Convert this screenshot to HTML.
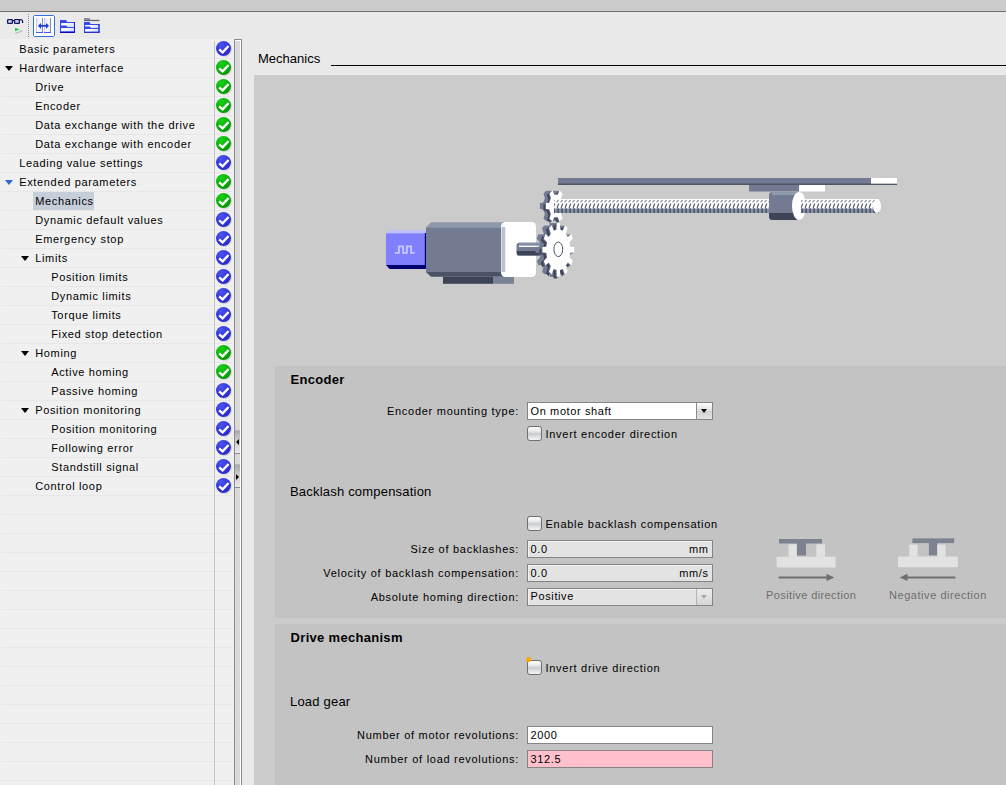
<!DOCTYPE html>
<html><head><meta charset="utf-8">
<style>
*{box-sizing:border-box;margin:0;padding:0}
html,body{width:1006px;height:785px;overflow:hidden;background:#e9e9e9;font-family:"Liberation Sans",sans-serif;color:#000}
.abs{position:absolute}
#topbar{position:absolute;left:0;top:0;width:1006px;height:12px;background:#cbcbcb;border-bottom:1px solid #6f6f6f}
#toolbar{position:absolute;left:0;top:12px;width:242px;height:27px;background:#eaeaea}
#tree{position:absolute;left:0;top:39px;width:234px;height:746px;background:#f0f0f0}
.sep{position:absolute;left:1px;width:232px;height:1px;background:#e7e7e7}
#vsep{position:absolute;left:214px;top:41px;width:1px;height:744px;background:#c4c4c4}
.tt{position:absolute;height:19px;line-height:19px;font-size:11px;letter-spacing:0.66px;white-space:nowrap;padding-top:1px}
.tt.sel{background:#c6ced9;margin-left:-2px;padding-left:2px;padding-right:0;margin-top:1px;height:18px;line-height:18px;padding-top:0}
.tri{position:absolute;width:0;height:0;border-left:4.2px solid transparent;border-right:4.2px solid transparent;border-top:5px solid #000}
.tri.tb{border-top-color:#3264d8}
.ck{position:absolute;left:216px;width:15px;height:15px;border-radius:50%;box-shadow:1px 1px 1px rgba(0,0,0,0.12)}
.ck svg{position:absolute;left:0;top:0}
.ck.b{background:radial-gradient(circle at 35% 25%,#4a55f0 0%,#3434d8 50%,#2424b4 100%)}
.ck.g{background:radial-gradient(circle at 35% 25%,#18d018 0%,#08b008 50%,#007a00 100%)}
#scroll{position:absolute;left:234px;top:39px;width:8px;height:746px;background:#d9d9d9;border:1px solid #8a8a8a;border-bottom:none;box-shadow:inset -1px 1px 0 #fff}
#pane{position:absolute;left:242px;top:12px;width:764px;height:773px;background:#e9e9e9}
#hdr{position:absolute;left:258px;top:51px;font-size:13px;line-height:16px;white-space:nowrap}
#hline{position:absolute;left:331px;top:65px;width:675px;height:1px;background:#000}
#gray{position:absolute;left:254px;top:75px;width:752px;height:710px;background:#cbcbcb}
.sec{position:absolute;left:275px;width:731px;background:#c3c3c3}
.h1{position:absolute;left:290.6px;font-size:13px;font-weight:bold;letter-spacing:0.3px;white-space:nowrap;line-height:16px}
.h2{position:absolute;left:290px;font-size:13px;white-space:nowrap;line-height:16px;letter-spacing:0.2px}
.lbl{position:absolute;right:487px;font-size:11px;letter-spacing:0.72px;white-space:nowrap;line-height:14px;text-align:right}
.fld{position:absolute;left:527px;width:186px;height:18px;border:1px solid #858585;background:#fff;font-size:11px;letter-spacing:0.6px;line-height:16px;padding-left:2.6px;white-space:nowrap}
.fld.dis{background:#e3e3e3;box-shadow:inset 1px 1px 0 #f4f4f4}
.fld .unit{position:absolute;right:3.4px;top:0}
.dd{height:17px;line-height:15px}
.ddb{position:absolute;right:0;top:0;width:16px;height:15px;border-left:1px solid #8a8a8a;background:linear-gradient(#fdfdfd,#e6e6e6 40%,#d4d4d4 55%,#e2e2e2)}
.ddb.dis2{background:linear-gradient(#ececec,#d6d6d6);border-left-color:#b4b4b4}.ddb.dis2:after{border-top-color:#a8a8a8}
.ddb:after{content:"";position:absolute;left:4px;top:6px;border-left:3.6px solid transparent;border-right:3.6px solid transparent;border-top:4.5px solid #000}
.cb{position:absolute;left:527px;width:15px;height:15px;border:1px solid #6f6f6f;border-radius:3px;background:linear-gradient(#fafafa 10%,#e0e2e4 40%,#c9cacd 52%,#e4e5e6 80%,#f6f6f6)}
.cbl{position:absolute;left:545.5px;font-size:11px;letter-spacing:0.72px;white-space:nowrap;line-height:14px}
.dirt{position:absolute;font-size:11px;letter-spacing:0.4px;color:#6e6e6e;white-space:nowrap;line-height:14px}
</style></head><body>
<div id="topbar"></div>
<div id="toolbar"></div>
<svg class="abs" style="left:0;top:12px" width="242" height="27" viewBox="0 12 242 27">
<defs><linearGradient id="lens" x1="0" y1="0" x2="1" y2="1"><stop offset="0" stop-color="#ffffff"/><stop offset="1" stop-color="#b8b8b8"/></linearGradient></defs>
<rect x="7.6" y="19.6" width="4.8" height="3.8" rx="0.6" fill="url(#lens)" stroke="#10186e" stroke-width="1.3"/>
<rect x="14.6" y="19.6" width="4.8" height="3.8" rx="0.6" fill="url(#lens)" stroke="#10186e" stroke-width="1.3"/>
<path d="M12.4 20.6 L14.6 20.6" stroke="#10186e" stroke-width="1.2"/>
<path d="M19.4 19.6 L21 19.6 Q22.6 19.6 22.6 21.5 L22.6 23" fill="none" stroke="#10186e" stroke-width="1.3"/>
<path d="M15 27.8 L19.8 29.6 L15 31.2 Z" fill="#20d040"/>
<path d="M15.2 33.6 L22.6 30.6" stroke="#a0a6b8" stroke-width="0.9"/>
<path d="M28.5 14 L28.5 37" stroke="#8a8a8a" stroke-width="1" stroke-dasharray="1 1"/>
<path d="M34.5 15.5 L53.5 15.5 L54.5 16.5 L54.5 35.5 L53.5 36.5 L34.5 36.5 L33.5 35.5 L33.5 16.5 Z" fill="#ffffff" stroke="#3070e0" stroke-width="1"/>
<defs><linearGradient id="pnl" x1="0" y1="0" x2="1" y2="1"><stop offset="0" stop-color="#dfe4fb"/><stop offset="0.5" stop-color="#f6f8ff"/><stop offset="1" stop-color="#e4e8fb"/></linearGradient></defs>
<rect x="36" y="18" width="6.5" height="14.5" fill="url(#pnl)"/>
<rect x="44" y="18" width="6.5" height="14.5" fill="url(#pnl)"/>
<rect x="36" y="18" width="1" height="14.5" fill="#c0c8f4"/>
<rect x="44" y="18" width="1" height="14.5" fill="#c0c8f4"/>
<rect x="42" y="18" width="1" height="14.5" fill="#8a90a0"/>
<rect x="50" y="18" width="1" height="14.5" fill="#8a90a0"/>
<rect x="36" y="32" width="7" height="1" fill="#4858e0"/>
<rect x="44" y="32" width="7" height="1" fill="#4858e0"/>
<path d="M39.5 25.8 L47.5 25.8" stroke="#1e3cd0" stroke-width="1.8"/>
<path d="M38 25.8 L41 22.9 L41 28.9 Z M49 25.8 L46 22.9 L46 28.9 Z" fill="#1e3cd0"/>
<defs><linearGradient id="band" x1="0" y1="0" x2="1" y2="0.4"><stop offset="0" stop-color="#dce2ff"/><stop offset="0.35" stop-color="#ffffff"/><stop offset="1" stop-color="#d8defc"/></linearGradient></defs>
<path d="M60 20 L66 20 L67.3 22 L75 22 L75 33 L60 33 Z" fill="#3448f0"/>
<rect x="60" y="32" width="15" height="1" fill="#0808b0"/>
<rect x="74" y="22" width="1" height="11" fill="#1020c0"/>
<path d="M61 23 L74 23 L74 27 L67.5 27 L66.3 25.6 L61 25.6 Z" fill="url(#band)"/>
<rect x="61" y="28" width="13" height="3.2" fill="url(#band)"/>
<path d="M84 18 L89.5 18 L90.5 19.8 L99.4 19.8 L99.4 21 L84 21 Z" fill="#868c9c"/>
<rect x="84" y="20.2" width="15.4" height="0.9" fill="#5a6070"/>
<path d="M84 22 L89.5 22 L90.7 24 L99.5 24 L99.5 32.6 L84 32.6 Z" fill="#3448f0"/>
<rect x="84" y="31.7" width="15.5" height="1" fill="#0808b0"/>
<rect x="98.5" y="24" width="1" height="8.6" fill="#1020c0"/>
<path d="M85 25 L98.3 25 L98.3 27.9 L91 27.9 L89.8 26.6 L85 26.6 Z" fill="url(#band)"/>
<rect x="85" y="29" width="13.3" height="2.6" fill="url(#band)"/>
</svg>
<div id="pane"></div>
<div id="tree"></div>
<div class="sep" style="top:58px"></div><div class="sep" style="top:77px"></div><div class="sep" style="top:96px"></div><div class="sep" style="top:115px"></div><div class="sep" style="top:134px"></div><div class="sep" style="top:153px"></div><div class="sep" style="top:172px"></div><div class="sep" style="top:191px"></div><div class="sep" style="top:210px"></div><div class="sep" style="top:229px"></div><div class="sep" style="top:248px"></div><div class="sep" style="top:267px"></div><div class="sep" style="top:286px"></div><div class="sep" style="top:305px"></div><div class="sep" style="top:324px"></div><div class="sep" style="top:343px"></div><div class="sep" style="top:362px"></div><div class="sep" style="top:381px"></div><div class="sep" style="top:400px"></div><div class="sep" style="top:419px"></div><div class="sep" style="top:438px"></div><div class="sep" style="top:457px"></div><div class="sep" style="top:476px"></div><div class="sep" style="top:495px"></div><div class="sep" style="top:514px"></div><div class="sep" style="top:533px"></div><div class="sep" style="top:552px"></div><div class="sep" style="top:571px"></div><div class="sep" style="top:590px"></div><div class="sep" style="top:609px"></div><div class="sep" style="top:628px"></div><div class="sep" style="top:647px"></div><div class="sep" style="top:666px"></div><div class="sep" style="top:685px"></div><div class="sep" style="top:704px"></div><div class="sep" style="top:723px"></div><div class="sep" style="top:742px"></div><div class="sep" style="top:761px"></div><div class="sep" style="top:780px"></div>
<div class="tt" style="left:19.2px;top:39px">Basic parameters</div>
<div class="ck b" style="top:41px"><svg width="15" height="15"><path d="M3.2 8.4 L6.6 11.4 L12.6 5" fill="none" stroke="#fff" stroke-width="2.4" stroke-linecap="butt"/></svg></div>
<div class="tri " style="left:5px;top:66px"></div>
<div class="tt" style="left:19.2px;top:58px">Hardware interface</div>
<div class="ck g" style="top:60px"><svg width="15" height="15"><path d="M3.2 8.4 L6.6 11.4 L12.6 5" fill="none" stroke="#fff" stroke-width="2.4" stroke-linecap="butt"/></svg></div>
<div class="tt" style="left:35.2px;top:77px">Drive</div>
<div class="ck g" style="top:79px"><svg width="15" height="15"><path d="M3.2 8.4 L6.6 11.4 L12.6 5" fill="none" stroke="#fff" stroke-width="2.4" stroke-linecap="butt"/></svg></div>
<div class="tt" style="left:35.2px;top:96px">Encoder</div>
<div class="ck g" style="top:98px"><svg width="15" height="15"><path d="M3.2 8.4 L6.6 11.4 L12.6 5" fill="none" stroke="#fff" stroke-width="2.4" stroke-linecap="butt"/></svg></div>
<div class="tt" style="left:35.2px;top:115px">Data exchange with the drive</div>
<div class="ck g" style="top:117px"><svg width="15" height="15"><path d="M3.2 8.4 L6.6 11.4 L12.6 5" fill="none" stroke="#fff" stroke-width="2.4" stroke-linecap="butt"/></svg></div>
<div class="tt" style="left:35.2px;top:134px">Data exchange with encoder</div>
<div class="ck g" style="top:136px"><svg width="15" height="15"><path d="M3.2 8.4 L6.6 11.4 L12.6 5" fill="none" stroke="#fff" stroke-width="2.4" stroke-linecap="butt"/></svg></div>
<div class="tt" style="left:19.2px;top:153px">Leading value settings</div>
<div class="ck b" style="top:155px"><svg width="15" height="15"><path d="M3.2 8.4 L6.6 11.4 L12.6 5" fill="none" stroke="#fff" stroke-width="2.4" stroke-linecap="butt"/></svg></div>
<div class="tri tb" style="left:5px;top:180px"></div>
<div class="tt" style="left:19.2px;top:172px">Extended parameters</div>
<div class="ck g" style="top:174px"><svg width="15" height="15"><path d="M3.2 8.4 L6.6 11.4 L12.6 5" fill="none" stroke="#fff" stroke-width="2.4" stroke-linecap="butt"/></svg></div>
<div class="tt sel" style="left:35.2px;top:191px">Mechanics</div>
<div class="ck g" style="top:193px"><svg width="15" height="15"><path d="M3.2 8.4 L6.6 11.4 L12.6 5" fill="none" stroke="#fff" stroke-width="2.4" stroke-linecap="butt"/></svg></div>
<div class="tt" style="left:35.2px;top:210px">Dynamic default values</div>
<div class="ck b" style="top:212px"><svg width="15" height="15"><path d="M3.2 8.4 L6.6 11.4 L12.6 5" fill="none" stroke="#fff" stroke-width="2.4" stroke-linecap="butt"/></svg></div>
<div class="tt" style="left:35.2px;top:229px">Emergency stop</div>
<div class="ck b" style="top:231px"><svg width="15" height="15"><path d="M3.2 8.4 L6.6 11.4 L12.6 5" fill="none" stroke="#fff" stroke-width="2.4" stroke-linecap="butt"/></svg></div>
<div class="tri " style="left:21px;top:256px"></div>
<div class="tt" style="left:35.2px;top:248px">Limits</div>
<div class="ck b" style="top:250px"><svg width="15" height="15"><path d="M3.2 8.4 L6.6 11.4 L12.6 5" fill="none" stroke="#fff" stroke-width="2.4" stroke-linecap="butt"/></svg></div>
<div class="tt" style="left:51.2px;top:267px">Position limits</div>
<div class="ck b" style="top:269px"><svg width="15" height="15"><path d="M3.2 8.4 L6.6 11.4 L12.6 5" fill="none" stroke="#fff" stroke-width="2.4" stroke-linecap="butt"/></svg></div>
<div class="tt" style="left:51.2px;top:286px">Dynamic limits</div>
<div class="ck b" style="top:288px"><svg width="15" height="15"><path d="M3.2 8.4 L6.6 11.4 L12.6 5" fill="none" stroke="#fff" stroke-width="2.4" stroke-linecap="butt"/></svg></div>
<div class="tt" style="left:51.2px;top:305px">Torque limits</div>
<div class="ck b" style="top:307px"><svg width="15" height="15"><path d="M3.2 8.4 L6.6 11.4 L12.6 5" fill="none" stroke="#fff" stroke-width="2.4" stroke-linecap="butt"/></svg></div>
<div class="tt" style="left:51.2px;top:324px">Fixed stop detection</div>
<div class="ck b" style="top:326px"><svg width="15" height="15"><path d="M3.2 8.4 L6.6 11.4 L12.6 5" fill="none" stroke="#fff" stroke-width="2.4" stroke-linecap="butt"/></svg></div>
<div class="tri " style="left:21px;top:351px"></div>
<div class="tt" style="left:35.2px;top:343px">Homing</div>
<div class="ck g" style="top:345px"><svg width="15" height="15"><path d="M3.2 8.4 L6.6 11.4 L12.6 5" fill="none" stroke="#fff" stroke-width="2.4" stroke-linecap="butt"/></svg></div>
<div class="tt" style="left:51.2px;top:362px">Active homing</div>
<div class="ck g" style="top:364px"><svg width="15" height="15"><path d="M3.2 8.4 L6.6 11.4 L12.6 5" fill="none" stroke="#fff" stroke-width="2.4" stroke-linecap="butt"/></svg></div>
<div class="tt" style="left:51.2px;top:381px">Passive homing</div>
<div class="ck b" style="top:383px"><svg width="15" height="15"><path d="M3.2 8.4 L6.6 11.4 L12.6 5" fill="none" stroke="#fff" stroke-width="2.4" stroke-linecap="butt"/></svg></div>
<div class="tri " style="left:21px;top:408px"></div>
<div class="tt" style="left:35.2px;top:400px">Position monitoring</div>
<div class="ck b" style="top:402px"><svg width="15" height="15"><path d="M3.2 8.4 L6.6 11.4 L12.6 5" fill="none" stroke="#fff" stroke-width="2.4" stroke-linecap="butt"/></svg></div>
<div class="tt" style="left:51.2px;top:419px">Position monitoring</div>
<div class="ck b" style="top:421px"><svg width="15" height="15"><path d="M3.2 8.4 L6.6 11.4 L12.6 5" fill="none" stroke="#fff" stroke-width="2.4" stroke-linecap="butt"/></svg></div>
<div class="tt" style="left:51.2px;top:438px">Following error</div>
<div class="ck b" style="top:440px"><svg width="15" height="15"><path d="M3.2 8.4 L6.6 11.4 L12.6 5" fill="none" stroke="#fff" stroke-width="2.4" stroke-linecap="butt"/></svg></div>
<div class="tt" style="left:51.2px;top:457px">Standstill signal</div>
<div class="ck b" style="top:459px"><svg width="15" height="15"><path d="M3.2 8.4 L6.6 11.4 L12.6 5" fill="none" stroke="#fff" stroke-width="2.4" stroke-linecap="butt"/></svg></div>
<div class="tt" style="left:35.2px;top:476px">Control loop</div>
<div class="ck b" style="top:478px"><svg width="15" height="15"><path d="M3.2 8.4 L6.6 11.4 L12.6 5" fill="none" stroke="#fff" stroke-width="2.4" stroke-linecap="butt"/></svg></div>
<div id="vsep"></div>
<div id="scroll"></div>
<div class="abs" style="left:235px;top:430px;width:5px;height:24px;background:linear-gradient(#a9a9a9,#cfcfcf 45%,#e9e9e9);border-bottom:1px solid #8a8a8a;border-top:1px solid #b8b8b8"></div>
<div class="abs" style="left:236px;top:439px;width:0;height:0;border-top:3px solid transparent;border-bottom:3px solid transparent;border-right:3px solid #000"></div>
<div class="abs" style="left:235px;top:464px;width:5px;height:24px;background:linear-gradient(#a9a9a9,#cfcfcf 45%,#e9e9e9);border-bottom:1px solid #8a8a8a;border-top:1px solid #b8b8b8"></div>
<div class="abs" style="left:236px;top:474px;width:0;height:0;border-top:3px solid transparent;border-bottom:3px solid transparent;border-left:3px solid #000"></div>

<div id="hdr">Mechanics</div>
<div id="hline"></div>
<div id="gray"></div>
<svg class="abs" style="left:0;top:0" width="1006" height="300" viewBox="0 0 1006 300"><rect x="558" y="178" width="313" height="6" fill="#737b93"/><rect x="558" y="183.5" width="339" height="1.5" fill="#4d5569"/><rect x="871" y="178" width="26" height="5.5" fill="#fff"/><rect x="749" y="185" width="50" height="6.5" fill="#737b93"/><rect x="799" y="185" width="26" height="6.5" fill="#fff"/><path d="M556.8 202.8 L560.1 203.1 L560.1 208.9 L556.8 209.2 L555.1 214.0 L556.6 218.6 L553.5 221.5 L551.7 217.2 L548.3 217.2 L546.5 221.5 L543.4 218.6 L544.9 214.0 L543.2 209.2 L539.9 208.9 L539.9 203.1 L543.2 202.8 L544.9 198.0 L543.4 193.4 L546.5 190.5 L548.3 194.8 L551.7 194.8 L553.5 190.5 L556.6 193.4 L555.1 198.0Z" fill="#737b93"/><path d="M557.8 202.8 L561.1 203.1 L561.1 208.9 L557.8 209.2 L556.1 214.0 L557.6 218.6 L554.5 221.5 L552.7 217.2 L549.3 217.2 L547.5 221.5 L544.4 218.6 L545.9 214.0 L544.2 209.2 L540.9 208.9 L540.9 203.1 L544.2 202.8 L545.9 198.0 L544.4 193.4 L547.5 190.5 L549.3 194.8 L552.7 194.8 L554.5 190.5 L557.6 193.4 L556.1 198.0Z" fill="#737b93"/><path d="M558.8 202.8 L562.1 203.1 L562.1 208.9 L558.8 209.2 L557.1 214.0 L558.6 218.6 L555.5 221.5 L553.7 217.2 L550.3 217.2 L548.5 221.5 L545.4 218.6 L546.9 214.0 L545.2 209.2 L541.9 208.9 L541.9 203.1 L545.2 202.8 L546.9 198.0 L545.4 193.4 L548.5 190.5 L550.3 194.8 L553.7 194.8 L555.5 190.5 L558.6 193.4 L557.1 198.0Z" fill="#737b93"/><path d="M559.8 202.8 L563.1 203.1 L563.1 208.9 L559.8 209.2 L558.1 214.0 L559.6 218.6 L556.5 221.5 L554.7 217.2 L551.3 217.2 L549.5 221.5 L546.4 218.6 L547.9 214.0 L546.2 209.2 L542.9 208.9 L542.9 203.1 L546.2 202.8 L547.9 198.0 L546.4 193.4 L549.5 190.5 L551.3 194.8 L554.7 194.8 L556.5 190.5 L559.6 193.4 L558.1 198.0Z" fill="#737b93"/><path d="M560.8 202.8 L564.1 203.1 L564.1 208.9 L560.8 209.2 L559.1 214.0 L560.6 218.6 L557.5 221.5 L555.7 217.2 L552.3 217.2 L550.5 221.5 L547.4 218.6 L548.9 214.0 L547.2 209.2 L543.9 208.9 L543.9 203.1 L547.2 202.8 L548.9 198.0 L547.4 193.4 L550.5 190.5 L552.3 194.8 L555.7 194.8 L557.5 190.5 L560.6 193.4 L559.1 198.0Z" fill="#737b93"/><path d="M561.8 202.8 L565.1 203.1 L565.1 208.9 L561.8 209.2 L560.1 214.0 L561.6 218.6 L558.5 221.5 L556.7 217.2 L553.3 217.2 L551.5 221.5 L548.4 218.6 L549.9 214.0 L548.2 209.2 L544.9 208.9 L544.9 203.1 L548.2 202.8 L549.9 198.0 L548.4 193.4 L551.5 190.5 L553.3 194.8 L556.7 194.8 L558.5 190.5 L561.6 193.4 L560.1 198.0Z" fill="#737b93"/><path d="M560.3 204.3 L563.6 204.6 L563.6 210.4 L560.3 210.7 L558.6 215.5 L560.1 220.1 L557.0 223.0 L555.2 218.7 L551.8 218.7 L550.0 223.0 L546.9 220.1 L548.4 215.5 L546.7 210.7 L543.4 210.4 L543.4 204.6 L546.7 204.3 L548.4 199.5 L546.9 194.9 L550.0 192.0 L551.8 196.3 L555.2 196.3 L557.0 192.0 L560.1 194.9 L558.6 199.5Z" fill="#3c4456"/><path d="M561.8 203.4 L565.1 203.7 L565.1 209.5 L561.8 209.8 L560.1 214.6 L561.6 219.2 L558.5 222.1 L556.7 217.8 L553.3 217.8 L551.5 222.1 L548.4 219.2 L549.9 214.6 L548.2 209.8 L544.9 209.5 L544.9 203.7 L548.2 203.4 L549.9 198.6 L548.4 194.0 L551.5 191.1 L553.3 195.4 L556.7 195.4 L558.5 191.1 L561.6 194.0 L560.1 198.6Z" fill="#5a6278"/><path d="M562.8 202.8 L566.1 203.1 L566.1 208.9 L562.8 209.2 L561.1 214.0 L562.6 218.6 L559.5 221.5 L557.7 217.2 L554.3 217.2 L552.5 221.5 L549.4 218.6 L550.9 214.0 L549.2 209.2 L545.9 208.9 L545.9 203.1 L549.2 202.8 L550.9 198.0 L549.4 193.4 L552.5 190.5 L554.3 194.8 L557.7 194.8 L559.5 190.5 L562.6 193.4 L561.1 198.0Z" fill="#fff"/><defs><pattern id="thr" x="0" y="199" width="4" height="14" patternUnits="userSpaceOnUse"><rect x="0" y="0" width="4" height="14" fill="#fff"/><rect x="0" y="9.5" width="4" height="4.5" fill="#8a92a8"/><path d="M1.6 14 Q1.0 11.7 1.6 9.5 L3.0 9.5 Q2.5 11.7 3.0 14 Z" fill="#454d62"/><path d="M1.2 9.4 Q1.6 6.5 2.9 4.6" fill="none" stroke="#5a6278" stroke-width="1.2"/><path d="M0.5 3.1 L2.6 1.2" stroke="#7a8298" stroke-width="1.1"/></pattern></defs><rect x="554" y="199" width="325" height="14" fill="url(#thr)"/><ellipse cx="877" cy="206" rx="4" ry="7" fill="#fff"/><path d="M769 195 Q769 192 772 192 L800 192 L800 220 L772 220 Q769 220 769 217 Z" fill="#737b93"/><rect x="772" y="192" width="28" height="3" fill="#8e99ab"/><path d="M769 213 L800 213 L800 220 L773 220 Q769 220 769 216Z" fill="#3c4456"/><ellipse cx="799" cy="206" rx="7" ry="14" fill="#fff"/><rect x="801" y="199" width="7" height="14" fill="url(#thr)"/><path d="M386 233.3 L389 230.2 L426 230.2 L426 233.3 Z" fill="#c0c0ff"/><rect x="386" y="233.3" width="39" height="31.7" fill="#8080ff"/><rect x="424.8" y="233" width="1.4" height="36" fill="#000060"/><path d="M386 265 L426 265 L426 269 L389.5 269 Z" fill="#000070"/><path d="M394.9 252.8 L398.9 252.8 L398.9 246.3 L403.2 246.3 L403.2 252.8 L406.9 252.8 L406.9 246.3 L411.1 246.3 L411.1 252.8 L414.8 252.8" fill="none" stroke="#c8c8ff" stroke-width="1.8"/><path d="M426 227.4 L431 222.2 L505 222.2 L505 227.4 Z" fill="#8e9aab"/><rect x="426" y="227.4" width="79" height="44.6" fill="#737b93"/><path d="M426 272 L505 272 L505 276.8 L431 276.8 Z" fill="#4a5266"/><rect x="443" y="276.8" width="50" height="7" fill="#3c4456"/><rect x="493" y="276.8" width="21" height="7" fill="#7a8296"/><rect x="501" y="222" width="35" height="55" rx="4.5" fill="#fff"/><rect x="501.5" y="227" width="3.8" height="45" fill="#bcc1cf"/><path d="M519 242.7 L546 242.7 L546 255.6 L519 255.6 Q516.5 255.6 516.5 252 L516.5 246 Q516.5 242.7 519 242.7Z" fill="#737b93"/><rect x="519" y="242.7" width="27" height="3" fill="#8890a8"/><rect x="519" y="245.7" width="25" height="1.3" fill="#fff"/><path d="M516.8 251 L546 251 L546 255.6 L519 255.6 Q516.8 255.6 516.8 253Z" fill="#3c4456"/><path d="M563.3 246.8 L567.2 247.1 L567.2 252.5 L563.3 252.8 L562.5 257.3 L565.8 260.9 L564.2 265.6 L560.8 262.5 L558.8 265.9 L560.6 271.7 L557.9 274.4 L555.8 268.9 L553.1 270.1 L552.9 276.7 L549.7 276.7 L549.5 270.1 L546.8 268.9 L544.7 274.4 L542.0 271.7 L543.8 265.9 L541.8 262.5 L538.4 265.6 L536.8 260.9 L540.1 257.3 L539.3 252.8 L535.4 252.5 L535.4 247.1 L539.3 246.8 L540.1 242.3 L536.8 238.7 L538.4 234.0 L541.8 237.1 L543.8 233.7 L542.0 227.9 L544.7 225.2 L546.8 230.7 L549.5 229.5 L549.7 222.9 L552.9 222.9 L553.1 229.5 L555.8 230.7 L557.9 225.2 L560.6 227.9 L558.8 233.7 L560.8 237.1 L564.2 234.0 L565.8 238.7 L562.5 242.3Z" fill="#737b93"/><path d="M564.3 246.8 L568.2 247.1 L568.2 252.5 L564.3 252.8 L563.5 257.3 L566.8 260.9 L565.2 265.6 L561.8 262.5 L559.8 265.9 L561.6 271.7 L558.9 274.4 L556.8 268.9 L554.1 270.1 L553.9 276.7 L550.7 276.7 L550.5 270.1 L547.8 268.9 L545.7 274.4 L543.0 271.7 L544.8 265.9 L542.8 262.5 L539.4 265.6 L537.8 260.9 L541.1 257.3 L540.3 252.8 L536.4 252.5 L536.4 247.1 L540.3 246.8 L541.1 242.3 L537.8 238.7 L539.4 234.0 L542.8 237.1 L544.8 233.7 L543.0 227.9 L545.7 225.2 L547.8 230.7 L550.5 229.5 L550.7 222.9 L553.9 222.9 L554.1 229.5 L556.8 230.7 L558.9 225.2 L561.6 227.9 L559.8 233.7 L561.8 237.1 L565.2 234.0 L566.8 238.7 L563.5 242.3Z" fill="#737b93"/><path d="M565.3 246.8 L569.2 247.1 L569.2 252.5 L565.3 252.8 L564.5 257.3 L567.8 260.9 L566.2 265.6 L562.8 262.5 L560.8 265.9 L562.6 271.7 L559.9 274.4 L557.8 268.9 L555.1 270.1 L554.9 276.7 L551.7 276.7 L551.5 270.1 L548.8 268.9 L546.7 274.4 L544.0 271.7 L545.8 265.9 L543.8 262.5 L540.4 265.6 L538.8 260.9 L542.1 257.3 L541.3 252.8 L537.4 252.5 L537.4 247.1 L541.3 246.8 L542.1 242.3 L538.8 238.7 L540.4 234.0 L543.8 237.1 L545.8 233.7 L544.0 227.9 L546.7 225.2 L548.8 230.7 L551.5 229.5 L551.7 222.9 L554.9 222.9 L555.1 229.5 L557.8 230.7 L559.9 225.2 L562.6 227.9 L560.8 233.7 L562.8 237.1 L566.2 234.0 L567.8 238.7 L564.5 242.3Z" fill="#737b93"/><path d="M566.3 246.8 L570.2 247.1 L570.2 252.5 L566.3 252.8 L565.5 257.3 L568.8 260.9 L567.2 265.6 L563.8 262.5 L561.8 265.9 L563.6 271.7 L560.9 274.4 L558.8 268.9 L556.1 270.1 L555.9 276.7 L552.7 276.7 L552.5 270.1 L549.8 268.9 L547.7 274.4 L545.0 271.7 L546.8 265.9 L544.8 262.5 L541.4 265.6 L539.8 260.9 L543.1 257.3 L542.3 252.8 L538.4 252.5 L538.4 247.1 L542.3 246.8 L543.1 242.3 L539.8 238.7 L541.4 234.0 L544.8 237.1 L546.8 233.7 L545.0 227.9 L547.7 225.2 L549.8 230.7 L552.5 229.5 L552.7 222.9 L555.9 222.9 L556.1 229.5 L558.8 230.7 L560.9 225.2 L563.6 227.9 L561.8 233.7 L563.8 237.1 L567.2 234.0 L568.8 238.7 L565.5 242.3Z" fill="#737b93"/><path d="M567.3 246.8 L571.2 247.1 L571.2 252.5 L567.3 252.8 L566.5 257.3 L569.8 260.9 L568.2 265.6 L564.8 262.5 L562.8 265.9 L564.6 271.7 L561.9 274.4 L559.8 268.9 L557.1 270.1 L556.9 276.7 L553.7 276.7 L553.5 270.1 L550.8 268.9 L548.7 274.4 L546.0 271.7 L547.8 265.9 L545.8 262.5 L542.4 265.6 L540.8 260.9 L544.1 257.3 L543.3 252.8 L539.4 252.5 L539.4 247.1 L543.3 246.8 L544.1 242.3 L540.8 238.7 L542.4 234.0 L545.8 237.1 L547.8 233.7 L546.0 227.9 L548.7 225.2 L550.8 230.7 L553.5 229.5 L553.7 222.9 L556.9 222.9 L557.1 229.5 L559.8 230.7 L561.9 225.2 L564.6 227.9 L562.8 233.7 L564.8 237.1 L568.2 234.0 L569.8 238.7 L566.5 242.3Z" fill="#737b93"/><path d="M568.3 246.8 L572.2 247.1 L572.2 252.5 L568.3 252.8 L567.5 257.3 L570.8 260.9 L569.2 265.6 L565.8 262.5 L563.8 265.9 L565.6 271.7 L562.9 274.4 L560.8 268.9 L558.1 270.1 L557.9 276.7 L554.7 276.7 L554.5 270.1 L551.8 268.9 L549.7 274.4 L547.0 271.7 L548.8 265.9 L546.8 262.5 L543.4 265.6 L541.8 260.9 L545.1 257.3 L544.3 252.8 L540.4 252.5 L540.4 247.1 L544.3 246.8 L545.1 242.3 L541.8 238.7 L543.4 234.0 L546.8 237.1 L548.8 233.7 L547.0 227.9 L549.7 225.2 L551.8 230.7 L554.5 229.5 L554.7 222.9 L557.9 222.9 L558.1 229.5 L560.8 230.7 L562.9 225.2 L565.6 227.9 L563.8 233.7 L565.8 237.1 L569.2 234.0 L570.8 238.7 L567.5 242.3Z" fill="#737b93"/><path d="M569.3 246.8 L573.2 247.1 L573.2 252.5 L569.3 252.8 L568.5 257.3 L571.8 260.9 L570.2 265.6 L566.8 262.5 L564.8 265.9 L566.6 271.7 L563.9 274.4 L561.8 268.9 L559.1 270.1 L558.9 276.7 L555.7 276.7 L555.5 270.1 L552.8 268.9 L550.7 274.4 L548.0 271.7 L549.8 265.9 L547.8 262.5 L544.4 265.6 L542.8 260.9 L546.1 257.3 L545.3 252.8 L541.4 252.5 L541.4 247.1 L545.3 246.8 L546.1 242.3 L542.8 238.7 L544.4 234.0 L547.8 237.1 L549.8 233.7 L548.0 227.9 L550.7 225.2 L552.8 230.7 L555.5 229.5 L555.7 222.9 L558.9 222.9 L559.1 229.5 L561.8 230.7 L563.9 225.2 L566.6 227.9 L564.8 233.7 L566.8 237.1 L570.2 234.0 L571.8 238.7 L568.5 242.3Z" fill="#737b93"/><path d="M567.3 248.6 L571.2 248.9 L571.2 254.3 L567.3 254.6 L566.5 259.1 L569.8 262.7 L568.2 267.4 L564.8 264.3 L562.8 267.7 L564.6 273.5 L561.9 276.2 L559.8 270.7 L557.1 271.9 L556.9 278.5 L553.7 278.5 L553.5 271.9 L550.8 270.7 L548.7 276.2 L546.0 273.5 L547.8 267.7 L545.8 264.3 L542.4 267.4 L540.8 262.7 L544.1 259.1 L543.3 254.6 L539.4 254.3 L539.4 248.9 L543.3 248.6 L544.1 244.1 L540.8 240.5 L542.4 235.8 L545.8 238.9 L547.8 235.5 L546.0 229.7 L548.7 227.0 L550.8 232.5 L553.5 231.3 L553.7 224.7 L556.9 224.7 L557.1 231.3 L559.8 232.5 L561.9 227.0 L564.6 229.7 L562.8 235.5 L564.8 238.9 L568.2 235.8 L569.8 240.5 L566.5 244.1Z" fill="#3c4456"/><path d="M569.1 247.5 L573.0 247.8 L573.0 253.2 L569.1 253.5 L568.3 258.0 L571.6 261.6 L570.0 266.3 L566.6 263.2 L564.6 266.6 L566.4 272.4 L563.7 275.1 L561.6 269.6 L558.9 270.8 L558.7 277.4 L555.5 277.4 L555.3 270.8 L552.6 269.6 L550.5 275.1 L547.8 272.4 L549.6 266.6 L547.6 263.2 L544.2 266.3 L542.6 261.6 L545.9 258.0 L545.1 253.5 L541.2 253.2 L541.2 247.8 L545.1 247.5 L545.9 243.0 L542.6 239.4 L544.2 234.7 L547.6 237.8 L549.6 234.4 L547.8 228.6 L550.5 225.9 L552.6 231.4 L555.3 230.2 L555.5 223.6 L558.7 223.6 L558.9 230.2 L561.6 231.4 L563.7 225.9 L566.4 228.6 L564.6 234.4 L566.6 237.8 L570.0 234.7 L571.6 239.4 L568.3 243.0Z" fill="#5a6278"/><path d="M570.3 246.8 L574.2 247.1 L574.2 252.5 L570.3 252.8 L569.5 257.3 L572.8 260.9 L571.2 265.6 L567.8 262.5 L565.8 265.9 L567.6 271.7 L564.9 274.4 L562.8 268.9 L560.1 270.1 L559.9 276.7 L556.7 276.7 L556.5 270.1 L553.8 268.9 L551.7 274.4 L549.0 271.7 L550.8 265.9 L548.8 262.5 L545.4 265.6 L543.8 260.9 L547.1 257.3 L546.3 252.8 L542.4 252.5 L542.4 247.1 L546.3 246.8 L547.1 242.3 L543.8 238.7 L545.4 234.0 L548.8 237.1 L550.8 233.7 L549.0 227.9 L551.7 225.2 L553.8 230.7 L556.5 229.5 L556.7 222.9 L559.9 222.9 L560.1 229.5 L562.8 230.7 L564.9 225.2 L567.6 227.9 L565.8 233.7 L567.8 237.1 L571.2 234.0 L572.8 238.7 L569.5 242.3Z" fill="#fff"/><ellipse cx="558.3" cy="249.3" rx="4.4" ry="7.3" fill="none" stroke="#4a5266" stroke-width="1"/></svg>

<div class="sec" style="top:366px;height:252px"></div>
<div class="sec" style="top:624px;height:161px"></div>

<div class="h1" style="top:372px">Encoder</div>
<div class="lbl" style="top:404px">Encoder mounting type:</div>
<div class="fld dd" style="top:402px;height:18px;line-height:16px">On motor shaft<div class="ddb" style="height:16px"></div></div>
<div class="cb" style="top:426px"></div>
<div class="cbl" style="top:427px">Invert encoder direction</div>

<div class="h2" style="top:484px">Backlash compensation</div>
<div class="cb" style="top:516px"></div>
<div class="cbl" style="top:517px">Enable backlash compensation</div>
<div class="lbl" style="top:542px">Size of backlashes:</div>
<div class="fld dis" style="top:540px">0.0<span class="unit">mm</span></div>
<div class="lbl" style="top:566px">Velocity of backlash compensation:</div>
<div class="fld dis" style="top:564px">0.0<span class="unit">mm/s</span></div>
<div class="lbl" style="top:590px">Absolute homing direction:</div>
<div class="fld dis dd" style="top:588px;height:18px">Positive<div class="ddb dis2" style="height:16px"></div></div>


<svg class="abs" style="left:760px;top:530px" width="240" height="60" viewBox="760 530 240 60">
<rect x="779" y="539" width="43" height="4.5" fill="#7c8290"/>
<rect x="797" y="543" width="9" height="12.5" fill="#7c8290"/>
<rect x="788.5" y="544.3" width="8.2" height="12.5" fill="#e2e2e2"/>
<rect x="816.4" y="544.3" width="8.6" height="12.5" fill="#e2e2e2"/>
<rect x="776.6" y="556.7" width="59" height="10.8" fill="#e2e2e2"/>
<path d="M778.7 577.4 L828 577.4" stroke="#6e6e6e" stroke-width="2"/>
<path d="M826.5 573.8 L834.2 577.4 L826.5 581 Z" fill="#6e6e6e"/>
<rect x="912.4" y="538.4" width="41.8" height="4.7" fill="#7c8290"/>
<rect x="928.9" y="543" width="8.4" height="12.3" fill="#7c8290"/>
<rect x="909.2" y="544.6" width="8.4" height="12" fill="#e2e2e2"/>
<rect x="937.3" y="544.6" width="8.3" height="12" fill="#e2e2e2"/>
<rect x="898" y="556.5" width="59.8" height="10.7" fill="#e2e2e2"/>
<path d="M906 577.4 L955.4 577.4" stroke="#6e6e6e" stroke-width="2"/>
<path d="M907.5 573.8 L899.7 577.4 L907.5 581 Z" fill="#6e6e6e"/>
</svg>
<div class="dirt" style="left:766px;top:588px">Positive direction</div>
<div class="dirt" style="left:889px;top:588px;letter-spacing:0.55px">Negative direction</div>
<div class="h1" style="top:630px">Drive mechanism</div>
<div class="cb" style="top:660px"></div>
<div class="abs" style="left:525.5px;top:657px;width:5px;height:5px;border-radius:50%;background:#ffa800"></div>
<div class="cbl" style="top:661px">Invert drive direction</div>
<div class="h2" style="top:694px">Load gear</div>
<div class="lbl" style="top:728px">Number of motor revolutions:</div>
<div class="fld" style="top:726px">2000</div>
<div class="lbl" style="top:752px">Number of load revolutions:</div>
<div class="fld" style="top:750px;background:#ffc0cb">312.5</div>

</body></html>
